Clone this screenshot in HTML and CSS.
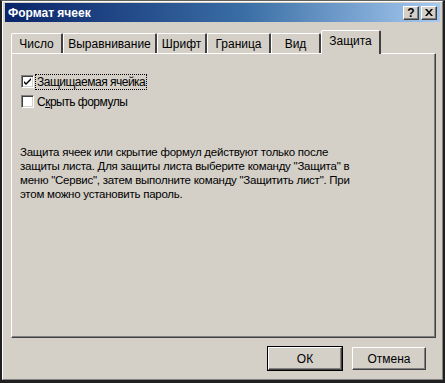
FILE: index.html
```html
<!DOCTYPE html>
<html lang="ru">
<head>
<meta charset="utf-8">
<link rel="stylesheet" href="styles.css">
</head>
<body>
<div class="window">
  <div class="inner">
    <div class="titlebar">
      <span class="title">Формат ячеек</span>
      <div class="tbtns">
        <span class="tbtn q">?</span>
        <span class="tbtn x"><svg width="8" height="7" viewBox="0 0 8 7"><path d="M0 0h2l2 2.5L6 0h2L5 3.5 8 7H6L4 4.5 2 7H0l3-3.5z" fill="#000"/></svg></span>
      </div>
    </div>
    <div class="tabs">
      <span class="tab">Число</span>
      <span class="tab">Выравнивание</span>
      <span class="tab">Шрифт</span>
      <span class="tab">Граница</span>
      <span class="tab">Вид</span>
      <span class="tab active">Защита</span>
    </div>
    <div class="panel">
      <label class="chk"><span class="box"><svg width="9" height="9" viewBox="0 0 9 9"><path d="M1 4l2 2 5-5v2L3 8 1 6z" fill="#000"/></svg></span><span class="lbl focus">Защищаемая ячейка</span></label>
      <label class="chk"><span class="box"></span><span class="lbl">С<u>к</u>рыть формулы</span></label>
      <p class="desc">Защита ячеек или скрытие формул действуют только после<br>защиты листа. Для защиты листа выберите команду "Защита" в<br>меню "Сервис", затем выполните команду "Защитить лист". При<br>этом можно установить пароль.</p>
    </div>
    <div class="footer">
      <span class="btn ok">ОК</span>
      <span class="btn">Отмена</span>
    </div>
  </div>
</div>
</body>
</html>
```
FILE: styles.css
```css
* { box-sizing: border-box; }
html, body { margin: 0; padding: 0; background: #1a1a1a; }
body { width: 445px; height: 383px; overflow: hidden; font-family: "Liberation Sans", Arial, sans-serif; font-size: 11px; color: #000; }
.window {
  width: 445px; height: 383px;
  border-left: 2px solid #202020;
  border-top: 1px solid #606060;
  border-right: 2px solid #202020;
  border-bottom: 3px solid #202020;
}
.inner {
  height: 100%;
  background: #d4d0c8;
  border-left: 1px solid #ffffff;
  border-top: 1px solid #ffffff;
  border-right: 1px solid #808080;
  border-bottom: 1px solid #808080;
  padding: 1px 2px 0 2px;
  display: flex; flex-direction: column;
}
.titlebar {
  height: 19px;
  background: linear-gradient(to right, #0a246a, #3a6ea5 55%, #a6caf0);
  display: flex; align-items: center; justify-content: space-between;
  padding: 0 3px 0 3px;
}
.title { color: #fff; font-weight: bold; font-size: 12px; font-family: "Liberation Sans", sans-serif; }
.tbtns { display: flex; gap: 2px; }
.tbtn {
  width: 16px; height: 14px; background: #d4d0c8;
  border: 1px solid; border-color: #fff #404040 #404040 #fff;
  box-shadow: inset -1px -1px 0 #808080;
  display: flex; align-items: center; justify-content: center;
  font-weight: bold; font-size: 12px; line-height: 1;
}
.tabs { display: flex; align-items: flex-end; margin: 8px 0 0 6px; height: 23px; font-size: 12px; }
.tab {
  height: 20px; padding: 3px 0 0; text-align: center;
  border-top: 1px solid #fff; border-left: 1px solid #fff;
  border-right: 2px solid #404040;
  border-top-left-radius: 2px; border-top-right-radius: 2px;
}
.tab:nth-child(1) { width: 52px; }
.tab:nth-child(2) { width: 94px; }
.tab:nth-child(3) { width: 50px; }
.tab:nth-child(4) { width: 64px; }
.tab:nth-child(5) { width: 50px; }
.tab.active { width: 60px; height: 24px; padding-top: 3px; margin-bottom: -1px; background: #d4d0c8; position: relative; z-index: 1; }
.panel {
  margin: 0 4px 0 6px; height: 285px;
  border-left: 1px solid #fff; border-top: 1px solid #fff;
  border-right: 1px solid #404040; border-bottom: 1px solid #404040;
  box-shadow: inset -1px -1px 0 #808080;
  padding: 21px 0 0 9px;
}
.chk { display: flex; align-items: center; height: 13px; margin-bottom: 7px; font-size: 12px; }
.box {
  width: 13px; height: 13px; background: #fff;
  border: 1px solid; border-color: #808080 #fff #fff #808080;
  box-shadow: inset 1px 1px 0 #404040, inset -1px -1px 0 #d4d0c8;
  display: flex; align-items: center; justify-content: center;
  margin-right: 2px;
}
.lbl { padding: 0 1px; line-height: 14px; letter-spacing: -0.5px; }
.lbl.focus { outline: 1px dotted #000; }
.lbl u { text-decoration: underline; }
.desc { margin: 37px 0 0 -1px; line-height: 14px; white-space: nowrap; font-size: 11.5px; letter-spacing: -0.25px; }
.footer { display: flex; justify-content: flex-end; gap: 10px; padding: 9px 14px 0 0; font-size: 12px; }
.btn {
  width: 74px; height: 23px; display: flex; align-items: center; justify-content: center;
  border: 1px solid; border-color: #fff #404040 #404040 #fff;
  box-shadow: inset -1px -1px 0 #808080;
}
.btn.ok { outline: 1px solid #000; }
```
